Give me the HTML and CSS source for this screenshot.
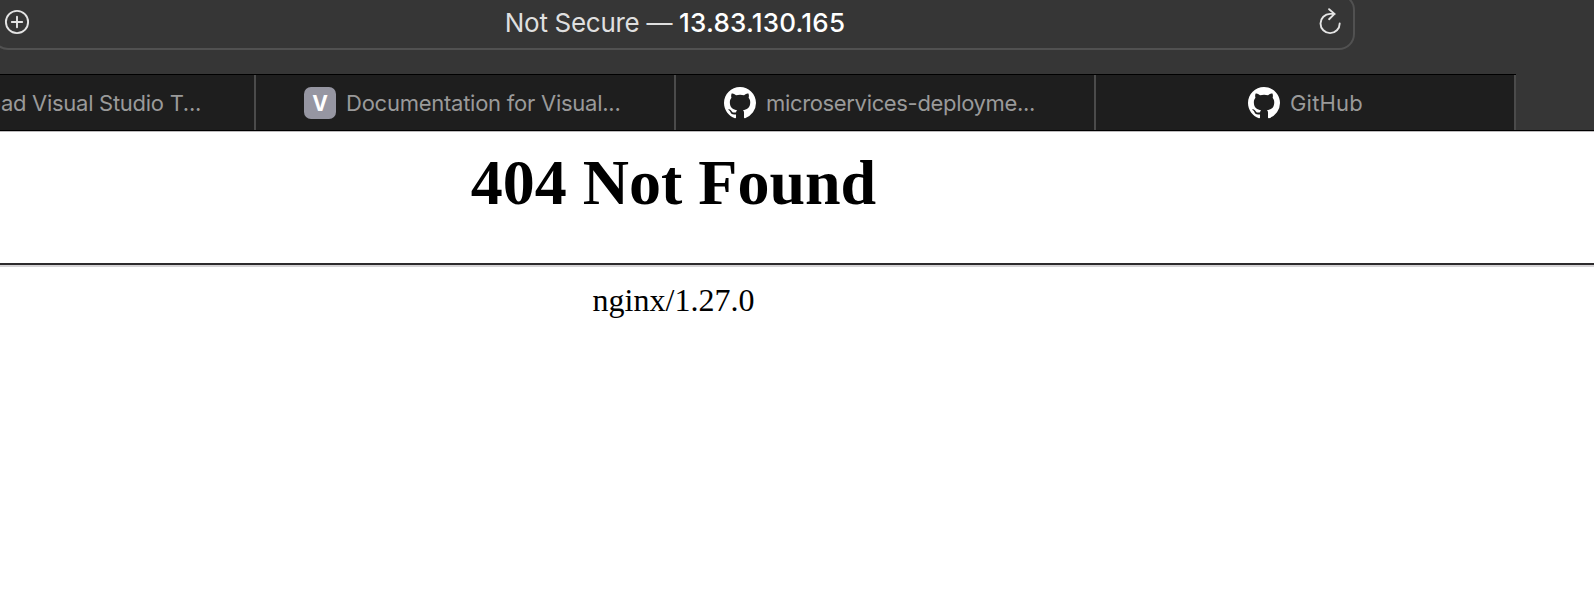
FILE: index.html
```html
<!DOCTYPE html>
<html lang="en">
<head>
<meta charset="utf-8">
<title>404 Not Found</title>
<link rel="stylesheet" href="styles.css">
</head>
<body>
<header class="toolbar">
  <div class="address">
    <svg class="add" width="26" height="26" viewBox="0 0 26 26"><circle cx="13" cy="13" r="11.1"/><path d="M13 7.8v10.4M7.8 13h10.4"/></svg>
    <div class="url"><span class="status">Not Secure — </span><span class="host">13.83.130.165</span></div>
    <svg class="reload" width="26" height="28" viewBox="0 0 26 28"><path d="M22.7 15.5a9.6 9.6 0 1 1-9.6-9.6h4.6M12.1 1.2l5.4 4.7-5.4 5.3"/></svg>
  </div>
</header>
<nav class="tabs">
  <div class="tab tab-first"><span class="label l1">oad Visual Studio T...</span></div>
  <div class="tab"><span class="letter">V</span><span class="label l2">Documentation for Visual...</span></div>
  <div class="tab"><svg class="mark" viewBox="0 0 16 16"><path d="M8 0C3.58 0 0 3.58 0 8c0 3.54 2.29 6.53 5.47 7.59.4.07.55-.17.55-.38 0-.19-.01-.82-.01-1.49-2.01.37-2.53-.49-2.69-.94-.09-.23-.48-.94-.82-1.13-.28-.15-.68-.52-.01-.53.63-.01 1.08.58 1.23.82.72 1.21 1.87.87 2.33.66.07-.52.28-.87.51-1.07-1.78-.2-3.64-.89-3.64-3.95 0-.87.31-1.59.82-2.15-.08-.2-.36-1.02.08-2.12 0 0 .67-.21 2.2.82.64-.18 1.32-.27 2-.27s1.36.09 2 .27c1.53-1.04 2.2-.82 2.2-.82.44 1.1.16 1.92.08 2.12.51.56.82 1.27.82 2.15 0 3.07-1.87 3.75-3.65 3.95.29.25.54.73.54 1.48 0 1.07-.01 1.93-.01 2.2 0 .21.15.46.55.38A8.01 8.01 0 0 0 16 8c0-4.42-3.58-8-8-8z"/></svg><span class="label l3">microservices-deployme...</span></div>
  <div class="tab tab-centered"><svg class="mark" viewBox="0 0 16 16"><path d="M8 0C3.58 0 0 3.58 0 8c0 3.54 2.29 6.53 5.47 7.59.4.07.55-.17.55-.38 0-.19-.01-.82-.01-1.49-2.01.37-2.53-.49-2.69-.94-.09-.23-.48-.94-.82-1.13-.28-.15-.68-.52-.01-.53.63-.01 1.08.58 1.23.82.72 1.21 1.87.87 2.33.66.07-.52.28-.87.51-1.07-1.78-.2-3.64-.89-3.64-3.95 0-.87.31-1.59.82-2.15-.08-.2-.36-1.02.08-2.12 0 0 .67-.21 2.2.82.64-.18 1.32-.27 2-.27s1.36.09 2 .27c1.53-1.04 2.2-.82 2.2-.82.44 1.1.16 1.92.08 2.12.51.56.82 1.27.82 2.15 0 3.07-1.87 3.75-3.65 3.95.29.25.54.73.54 1.48 0 1.07-.01 1.93-.01 2.2 0 .21.15.46.55.38A8.01 8.01 0 0 0 16 8c0-4.42-3.58-8-8-8z"/></svg><span class="label l4">GitHub</span></div>
</nav>
<main class="page">
  <h1 class="title">404 Not Found</h1>
  <hr class="rule">
  <p class="server">nginx/1.27.0</p>
</main>
</body>
</html>
```
FILE: styles.css
```css
* { box-sizing: border-box; }
body {
  margin: 0;
  width: 1594px;
  height: 606px;
  overflow: hidden;
  background: #fff;
  font-family: Inter, "Liberation Sans", sans-serif;
}
.toolbar { height: 74px; background: #363636; }
.address {
  display: flex;
  align-items: center;
  justify-content: space-between;
  width: 1363px;
  height: 56px;
  margin-left: -8px;
  padding: 0 10px;
  border: 2px solid #515151;
  border-radius: 16px;
  transform: translateY(-6px);
}
.address svg { fill: none; stroke: #e4e4e4; stroke-width: 1.9; stroke-linecap: round; stroke-linejoin: round; flex: none; }
.url { padding: 2px 0 0 3px; font-size: 26px; line-height: 32px; white-space: pre; color: #fff; }
.status { color: #dfdfdf; letter-spacing: -0.3px; }
.host { font-weight: 500; letter-spacing: 0.2px; }
.tabs {
  display: flex;
  height: 58px;
  padding-bottom: 1px;
  background: linear-gradient(#000 0 1px, transparent 1px) 0 0 / 1516px 100% no-repeat, linear-gradient(#363636 0 56px, #000 56px 57px, #bdbbbd 57px);
}
.tab {
  display: flex;
  align-items: center;
  flex: none;
  width: 420px;
  height: 55px;
  margin-top: 1px;
  padding-left: 48px;
  border-right: 2px solid #4b4b4b;
  background: #1e1e1e;
}
.tab-first { width: 256px; padding: 0 53px 0 0; justify-content: flex-end; overflow: hidden; }
.tab-centered { padding-left: 152px; }
.label { flex: none; margin-left: 10px; font-size: 22px; line-height: 30px; white-space: nowrap; color: #9a9a9a; }
.l1 { letter-spacing: -0.28px; }
.l2 { letter-spacing: -0.25px; }
.l3 { letter-spacing: -0.34px; }
.l4 { letter-spacing: 0.2px; }
.mark { width: 32px; height: 32px; fill: #fff; flex: none; }
.letter {
  width: 32px;
  height: 32px;
  flex: none;
  border-radius: 7px;
  background: #9696a2;
  color: #fff;
  font-size: 21px;
  font-weight: 700;
  line-height: 34px;
  text-align: center;
}
.page { font-family: "Liberation Serif", serif; color: #000; }
.title { width: 1347px; margin: 0; padding-top: 14px; font-size: 64px; line-height: 74px; font-weight: 700; text-align: center; }
.rule { height: 4px; margin: 43px 0 0; border: 0; background: linear-gradient(#2d2b2d 50%, #d6d4d6 50%); }
.server { width: 1347px; margin: 15px 0 0; font-size: 32px; line-height: 36px; text-align: center; }
```
